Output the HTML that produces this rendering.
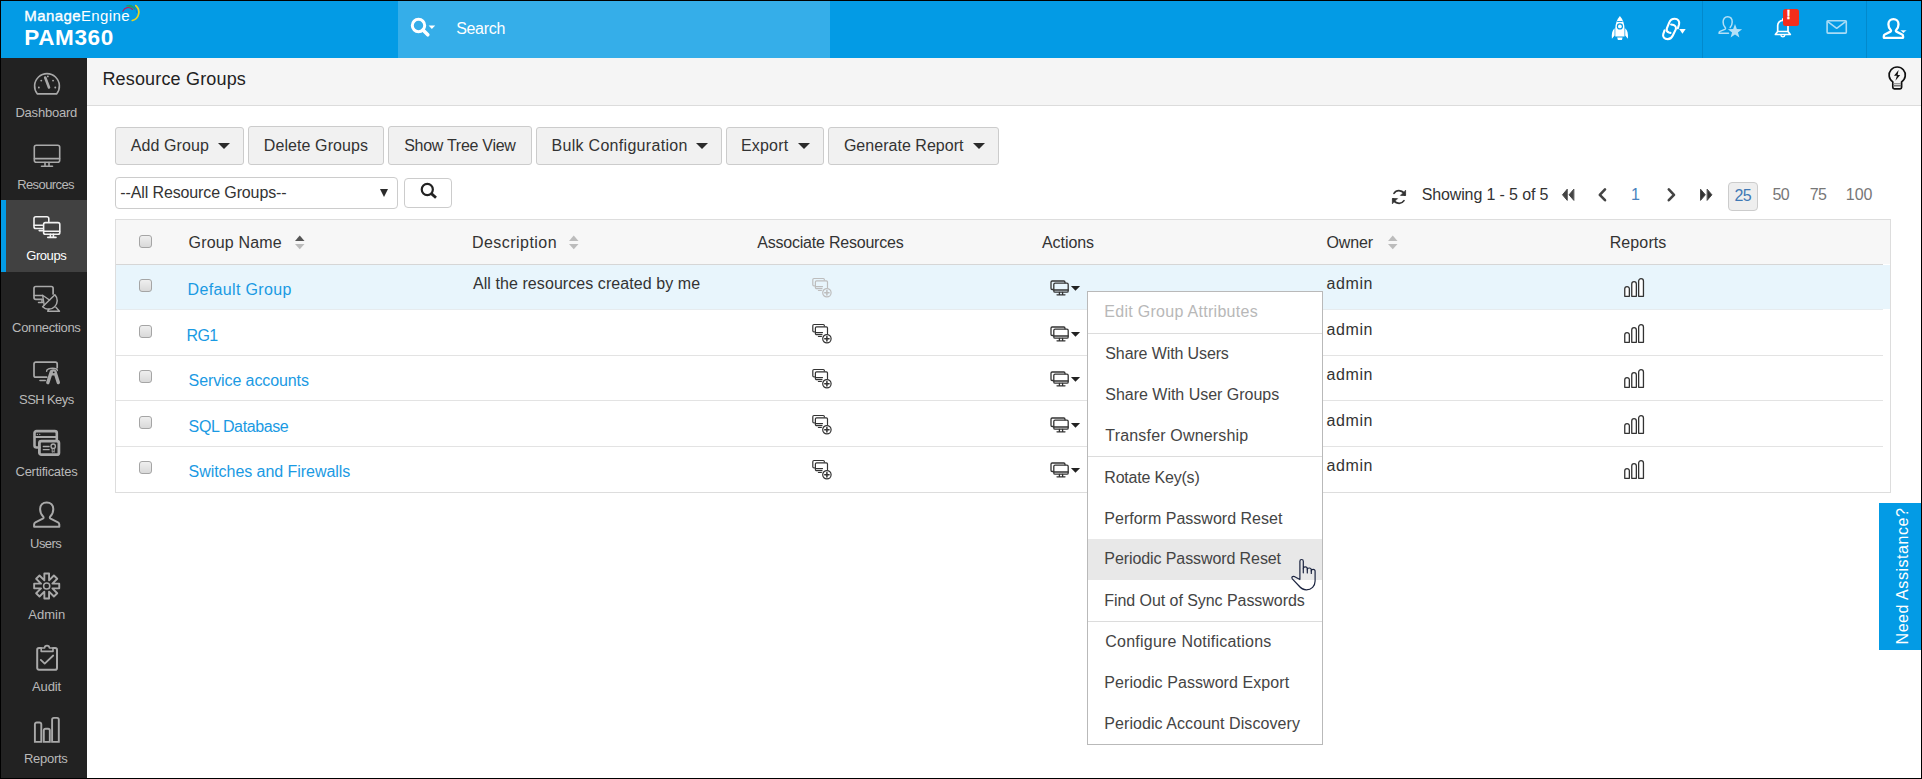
<!DOCTYPE html>
<html lang="en">
<head>
<meta charset="utf-8">
<title>Resource Groups - PAM360</title>
<style>
*{box-sizing:border-box;margin:0;padding:0}
html,body{width:1922px;height:779px;overflow:hidden;background:#000}
body{font-family:"Liberation Sans",sans-serif;font-size:16px;color:#333;position:relative}
#app{position:absolute;left:1px;top:1px;width:1920px;height:777px;background:#fff;overflow:hidden}
.abs{position:absolute}
.t{position:absolute;white-space:nowrap}
#hdr{position:absolute;left:0;top:0;width:1920px;height:57px;background:#039be5}
#srch{position:absolute;left:397px;top:0;width:432px;height:57px;background:#35aee9}
#side{position:absolute;left:0;top:57px;width:86px;height:720px;background:#222}
#navon{position:absolute;left:0;top:142px;width:86px;height:72px;background:#414141;border-left:5px solid #039be5}
.ni{position:absolute;width:32px;height:32px;fill:none;stroke:#a9a9a9;stroke-width:1.6;stroke-linecap:round;stroke-linejoin:round}
.ni.on{stroke:#f2f2f2}
#tbar{position:absolute;left:86px;top:57px;width:1834px;height:48px;background:#f5f5f5;border-bottom:1px solid #dcdcdc}
.btn{position:absolute;top:125px;height:39px;border:1px solid #ccc;border-radius:3px;background:#f1f1f1}
.caret{position:absolute;width:0;height:0;border-left:6px solid transparent;border-right:6px solid transparent;border-top:6px solid #2b2b2b}
#lg1{left:23.300px;top:4px;color:#fff;font-size:15px;line-height:22px;letter-spacing:.4px}
#lg1 b{font-weight:400;-webkit-text-stroke:.35px #fff}
#lg2{left:23.300px;top:24px;color:#fff;font-size:22.5px;font-weight:700;line-height:26px;letter-spacing:.6px}
#sel{position:absolute;left:114px;top:176px;width:283px;height:32px;border:1px solid #ccc;border-radius:4px;background:#fff}
#sbtn{position:absolute;left:403px;top:177px;width:48px;height:30px;border:1px solid #ccc;border-radius:4px;background:#fff}
#tbl{position:absolute;left:114px;top:218px;width:1776px;height:274px;border:1px solid #ddd;background:#fff}
#thead{position:absolute;left:0;top:0;width:1774px;height:44px;background:#f7f7f7}
.hl{position:absolute;left:0;width:1767px;height:1px;background:#e3e3e3}
#row1{position:absolute;left:0;top:45px;width:1774px;height:44px;background:#e8f5fc}
.cb{position:absolute;left:138px;width:13px;height:13px;border:1px solid #a5a5a5;border-radius:3px;background:linear-gradient(#efefef,#d9d9d9)}
#dd{position:absolute;left:1086px;top:290px;width:236px;height:454px;border:1px solid #b9b9b9;background:#fff}
.dv{position:absolute;left:0;width:234px;height:1px;background:#dcdcdc}
#ddh{position:absolute;left:0;top:247px;width:234px;height:41px;background:#e8e8e8}
#pg25{position:absolute;left:1727px;top:181px;width:30px;height:29px;border:1px solid #ccc;border-radius:4px;background:#eee}
#need{position:absolute;left:1878px;top:502px;width:42px;height:147px;background:#039be5}
#need span{position:absolute;left:23.500px;top:73px;white-space:nowrap;color:#fff;font-size:16px;line-height:20px;letter-spacing:.55px;transform:translate(-50%,-50%) rotate(-90deg)}
.ic{position:absolute;fill:none;stroke-linecap:round;stroke-linejoin:round}
#badge{left:1782px;top:8px;width:16px;height:17px;border-radius:2.5px;background:#f32d1b;color:#fff;font-size:12px;font-weight:700;line-height:13px;padding-left:3.600px;-webkit-text-stroke:.35px #fff}

</style>
</head>
<body>
<div id="app">
<div id="hdr">
  <div class="abs" id="lg1"><b>Manage</b>Engine</div>
  <svg class="abs" style="left:119px;top:2px" width="22" height="22" viewBox="0 0 22 22" fill="none" stroke-linecap="round">
    <path d="M2.800 8.300Q4.200 5.200 7.200 4.600T12.600 6.500" stroke="#c2185b" stroke-width="1.100"/>
    <path d="M5.400 3.100Q9.800 .6 13.200 3.200T15 6.900Q12.600 4.300 9.400 4T5.400 3.100Z" fill="#1f9a6d"/>
    <path d="M14.200 2.600Q16.800 5.600 16.700 9.600" stroke="#0a7fd0" stroke-width="1"/>
    <path d="M15.800 2.600A8.600 8.600 0 0 1 12.300 17.500" stroke="#ecd51f" stroke-width="1.700"/>
  </svg>
  <div class="abs" id="lg2">PAM360</div>
  <div id="srch">
    <svg class="abs" style="left:11px;top:15px" width="32" height="24" viewBox="0 0 32 24">
      <circle cx="9.5" cy="9.5" r="6.2" fill="none" stroke="#fff" stroke-width="3"/>
      <path d="M14 14 L18.800 18.800" stroke="#fff" stroke-width="3.600" stroke-linecap="round"/>
      <path d="M19.600 9.500h6.600l-3.300 3.400z" fill="#fff"/>
    </svg>
    
  </div>
  <svg class="abs" style="left:1609px;top:14px" width="20" height="26" viewBox="0 0 20 26" fill="#fff">
    <path d="M9.900 1C13 4.500 14.500 9 14.500 13.500V21.600H5.300V13.500C5.300 9 6.800 4.500 9.900 1Z"/>
    <path d="M4.600 13.200C2.300 15.300 1.400 18.500 1.900 23.800L4.600 20.600ZM15.200 13.200C17.500 15.300 18.400 18.500 17.900 23.800L15.200 20.600Z"/>
    <path d="M7.200 22.600H12.600L11.900 25.100H7.900Z"/>
    <path d="M7.200 6.500H12.600" stroke="#039be5" stroke-width=".9"/>
    <circle cx="9.900" cy="11.400" r="3.100" fill="#039be5"/><circle cx="9.900" cy="11.400" r="1.900"/>
  </svg>
  <svg class="abs" style="left:1659px;top:15px" width="28" height="26" viewBox="0 0 28 26" fill="none" stroke="#fff" stroke-width="2.100" stroke-linecap="round">
    <path d="M17.88 12.31 L19.07 8.29 C19.79 5.32 17.88 2.78 14.70 2.78 C11.95 2.78 10.25 4.05 9.19 6.59 L6.86 12.31 C6.23 14.22 7.29 15.92 8.98 16.55 L10.47 16.85"/>
    <path d="M4.53 14.43 L3.26 18.03 C2.42 20.79 4.32 23.12 7.71 23.12 C10.04 23.12 11.74 21.85 12.80 19.52 L15.76 13.37 C16.40 11.47 15.34 9.56 13.64 8.92 L11.10 8.50"/>
    <path d="M19.200 12.900H25.700L22.450 17.800Z" fill="#fff" stroke="none"/>
  </svg>
  <svg class="abs" style="left:1716px;top:14px" width="28" height="26" viewBox="0 0 28 26" fill="none" stroke="#b3e0f7" stroke-width="1.500" stroke-linecap="round" stroke-linejoin="round">
    <path d="M13.200 12.400C14.300 11.300 15.200 9.500 15.200 7C15.200 4 13.600 1.700 10.650 1.700C7.700 1.700 6.100 4 6.100 7C6.100 9.500 7 11.300 8.100 12.400C8.800 13.200 8.600 14 7.800 14.400L3 16.400C2.200 16.800 2 17.400 2 18.200H11.500"/>
    <path d="M18.00 9.00L19.82 13.99L25.13 14.18L20.95 17.46L22.41 22.57L18.00 19.60L13.59 22.57L15.05 17.46L10.87 14.18L16.18 13.99Z" fill="#b3e0f7" stroke="none"/>
  </svg>
  <svg class="abs" style="left:1772px;top:15px" width="20" height="24" viewBox="0 0 20 24" fill="none" stroke="#fff" stroke-width="1.700" stroke-linejoin="round">
    <path d="M9.850 2.200V4.300M4.700 15.500V9.500A5.150 5.150 0 0 1 15 9.500V15.500L17.300 18.500H2.400L4.700 15.500H15"/>
    <path d="M7.800 19.200A2.100 2.100 0 0 0 11.900 19.200" stroke-width="1.400"/>
  </svg>
  <div class="abs" id="badge">!</div>
  <svg class="abs" style="left:1824px;top:18px" width="24" height="17" viewBox="0 0 24 17" fill="none" stroke="#a9dcf6" stroke-width="1.600" stroke-linejoin="round">
    <rect x="2.100" y="1.800" width="19.200" height="12.300" rx=".8"/><path d="M2.500 2.300L11.700 9.300L20.900 2.300"/>
  </svg>
  <svg class="abs" style="left:1880px;top:16px" width="28" height="24" viewBox="0 0 28 24" fill="none" stroke="#fff" stroke-linejoin="round">
    <path d="M15.700 3.400C19.600 3.400 22.300 6.200 22.300 10C22.300 13.300 21.100 15.600 19.500 17.200C18.600 18.100 18.500 19.100 19.600 19.700L27 23.400C28 23.900 28.300 24.600 28.300 25.600V27.800H3.100V25.600C3.100 24.600 3.400 23.900 4.400 23.400L11.800 19.700C12.900 19.100 12.800 18.100 11.900 17.200C10.300 15.600 9.100 13.300 9.100 10C9.100 6.200 11.800 3.400 15.700 3.400Z" transform="translate(.44 -.45) scale(.765)" stroke-width="3"/>
    <path d="M18.900 13H25.900L22.400 16.200Z" fill="#fff" stroke="#039be5" stroke-width=".6"/>
  </svg>
  <div class="abs" style="left:1701px;top:0;width:1px;height:57px;background:#0289cc"></div>
  <div class="abs" style="left:1865px;top:0;width:1px;height:57px;background:#0289cc"></div>
</div><span class="t" style="left:455.2px;top:18px;font-size:16px;line-height:20px;letter-spacing:-0.32px;color:#fff">Search</span>
<div id="side"><div id="navon"></div></div>
<svg class="ni" style="left:30px;top:67.0px" viewBox="0 0 32 32"><path d="M6.4 25.9 A12.4 12.4 0 1 1 25.6 25.9 Z"/><path d="M14.2 9.5 L18 19.5" stroke-width="2.6"/><path d="M7.8 19.5h.1M10.2 12.6h.1M16.8 8.4h.1M22 12.6h.1M24.2 19.5h.1" stroke-width="1.8"/></svg>
<svg class="ni" style="left:30px;top:139.0px" viewBox="0 0 32 32"><rect x="3.3" y="5.3" width="25.4" height="17" rx="2"/><path d="M3.5 18.6H28.5M14 22.5V25.6M18 22.5V25.6M10.5 26.2H21.5"/></svg>
<svg class="ni on" style="left:30px;top:210.0px" viewBox="0 0 32 32"><path d="M11.5 17.5H4.8a1.8 1.8 0 0 1-1.8-1.8V7.6a1.8 1.8 0 0 1 1.8-1.8H16a1.8 1.8 0 0 1 1.8 1.8V10.5"/><path d="M3.2 14.2H11.5M8.2 19.6H11.5"/><rect x="12.6" y="11.6" width="16.2" height="11.6" rx="1.8"/><path d="M12.8 20.2H28.6M19.4 23.4V26M22.4 23.4V26M16.8 26.4H25"/></svg>
<svg class="ni" style="left:30px;top:282.2px" viewBox="0 0 32 32"><path d="M11 16.3H4.800a1.800 1.800 0 0 1-1.800-1.800V5.300a1.800 1.800 0 0 1 1.800-1.800H20.300a1.800 1.800 0 0 1 1.800 1.800V11" stroke-width="1.700"/><path d="M3.200 12.500H11M7.500 19.400H11.500M11 16.500V19.200" stroke-width="1.500"/><path d="M23.900 11.700A8.630 8.630 0 0 1 11.600 23.800Z" stroke-width="1.500"/><path d="M13.200 22.200L11.600 12.200L18.500 17" stroke-width="1.400"/><path d="M24.900 24.200L28.500 28.200H16.700L18 25.800" stroke-width="1.400"/></svg>
<svg class="ni" style="left:30px;top:355.7px" viewBox="0 0 32 32"><path d="M15.700 20.200H4.800a1.800 1.800 0 0 1-1.800-1.800V6.900a1.800 1.800 0 0 1 1.800-1.800H24.400a1.800 1.800 0 0 1 1.800 1.800V10.700" stroke-width="1.700"/><path d="M9 23.500H14.200"/><path d="M15.600 14.200C15.400 12 19 11.300 21.500 11.300S26.300 12 26.300 13.600" stroke-width="1.400"/><path d="M20.300 15L16.800 25.600M24 15L27.300 25.600" stroke-width="3.400"/><circle cx="22.200" cy="15.400" r="3.100" fill="#a9a9a9" stroke="none"/><circle cx="22.700" cy="15.300" r=".9" fill="#222" stroke="none"/></svg>
<svg class="ni" style="left:30px;top:426.0px" viewBox="0 0 32 32"><path d="M8.400 20.500H5.500a2 2 0 0 1-2-2V6.100a2 2 0 0 1 2-2H23.800a2 2 0 0 1 2 2V13.500" stroke-width="2.600"/><path d="M3.700 10.100H25.600" stroke-width="2"/><path d="M6.300 7.400h.1M8.700 7.400h.1" stroke-width="1.100"/><rect x="8.400" y="14.100" width="19.500" height="13.600" rx="2" stroke-width="2.800"/><path d="M12.300 19.500H18.100M12.300 22.700H18.100" stroke-width="1.300"/><circle cx="22.200" cy="19.200" r="2.200" stroke-width="1.400"/><path d="M21.200 21.500V25.300L22.200 24.500L23.200 25.300V21.500" stroke-width="1"/></svg>
<svg class="ni" style="left:30px;top:498.3px" viewBox="0 0 32 32"><path d="M15.700 3.400C19.600 3.400 22.300 6.200 22.300 10C22.300 13.300 21.100 15.600 19.500 17.200C18.600 18.100 18.500 19.100 19.600 19.700L27 23.400C28 23.900 28.300 24.600 28.300 25.600V27.800H3.100V25.600C3.100 24.600 3.400 23.900 4.400 23.400L11.800 19.700C12.900 19.100 12.800 18.100 11.900 17.200C10.300 15.600 9.100 13.300 9.100 10C9.100 6.200 11.800 3.400 15.700 3.400Z" stroke-width="2"/></svg>
<svg class="ni" style="left:30px;top:569.0px" viewBox="0 0 32 32"><path d="M13.35 3.45L18.05 3.45L18.05 10.33L22.91 5.46L26.24 8.79L21.37 13.65L28.25 13.65L28.25 18.35L21.37 18.35L26.24 23.21L22.91 26.54L18.05 21.67L18.05 28.55L13.35 28.55L13.35 21.67L8.49 26.54L5.16 23.21L10.03 18.35L3.15 18.35L3.15 13.65L10.03 13.65L5.16 8.79L8.49 5.46L13.35 10.33Z" stroke-width="1.900" stroke-linejoin="round"/><circle cx="15.7" cy="16.0" r="3.100" stroke-width="1.500"/></svg>
<svg class="ni" style="left:30px;top:641.4px" viewBox="0 0 32 32"><path d="M10.200 6.100H8a1.800 1.800 0 0 0-1.800 1.800V25.900a1.800 1.800 0 0 0 1.800 1.800H24.200a1.800 1.800 0 0 0 1.800-1.800V7.900a1.800 1.800 0 0 0-1.800-1.800H22" stroke-width="2"/><path d="M10.200 9.400V7a1 1 0 0 1 1-1H13.600A2.400 2.400 0 0 1 18.400 6H21a1 1 0 0 1 1 1V9.400Z" stroke-width="1.600"/><path d="M9.800 17.900L13.700 21.600L22.200 13.500" stroke-width="1.800"/></svg>
<svg class="ni" style="left:30px;top:713.0px" viewBox="0 0 32 32"><path d="M3.9 27.9V10.30a1.8 1.8 0 0 1 1.8 -1.8H8.50a1.8 1.8 0 0 1 1.8 1.8V27.9ZM12.8 27.9V16.50a1.8 1.8 0 0 1 1.8 -1.8H17.00a1.8 1.8 0 0 1 1.8 1.8V27.9ZM21.1 27.9V5.70a1.8 1.8 0 0 1 1.8 -1.8H26.00a1.8 1.8 0 0 1 1.8 1.8V27.9Z" stroke-width="1.900" stroke-linejoin="miter"/></svg>
<span class="t" style="left:14.4px;top:104px;font-size:13px;line-height:16px;letter-spacing:-0.21px;color:#b9b9b9">Dashboard</span>
<span class="t" style="left:16.2px;top:176px;font-size:13px;line-height:16px;letter-spacing:-0.6px;color:#b9b9b9">Resources</span>
<span class="t" style="left:25.3px;top:247px;font-size:13px;line-height:16px;letter-spacing:-0.45px;color:#fff">Groups</span>
<span class="t" style="left:11.1px;top:319px;font-size:13px;line-height:16px;letter-spacing:-0.35px;color:#b9b9b9">Connections</span>
<span class="t" style="left:18.1px;top:391px;font-size:13px;line-height:16px;letter-spacing:-0.6px;color:#b9b9b9">SSH Keys</span>
<span class="t" style="left:14.5px;top:463px;font-size:13px;line-height:16px;letter-spacing:-0.26px;color:#b9b9b9">Certificates</span>
<span class="t" style="left:29.1px;top:535px;font-size:13px;line-height:16px;letter-spacing:-0.6px;color:#b9b9b9">Users</span>
<span class="t" style="left:27.2px;top:606px;font-size:13px;line-height:16px;letter-spacing:0.05px;color:#b9b9b9">Admin</span>
<span class="t" style="left:30.9px;top:678px;font-size:13px;line-height:16px;letter-spacing:-0.08px;color:#b9b9b9">Audit</span>
<span class="t" style="left:23.0px;top:750px;font-size:13px;line-height:16px;letter-spacing:-0.29px;color:#b9b9b9">Reports</span>

<div id="tbar"></div>
<span class="t" style="left:101.4px;top:67px;font-size:18px;line-height:22px;letter-spacing:0.17px;color:#222">Resource Groups</span>
<svg class="ic" style="left:1886px;top:64px" width="22" height="26" viewBox="0 0 22 26" stroke="#111" stroke-width="1.700">
<path d="M5.800 16.900A8.100 8.100 0 1 1 14.600 16.900V22.300a1.500 1.500 0 0 1-1.500 1.500H7.300a1.500 1.500 0 0 1-1.500-1.500Z"/>
<path d="M7 18.500H13.400" stroke="#9a9a9a" stroke-width="1.200"/><path d="M7 20.700H13.400" stroke="#777" stroke-width="1.700"/>
<path d="M11.600 5.100L7 10.700H9.900L8.400 15.700L13.200 10H10.600Z" fill="#111" stroke="none"/>
</svg>
<div class="btn" style="left:114px;width:129px;top:126px;height:38px"></div>
<span class="t" style="left:129.8px;top:135px;font-size:16px;line-height:20px;letter-spacing:0.09px;color:#333">Add Group</span>
<i class="caret" style="left:217px;top:142px"></i>
<div class="btn" style="left:247px;width:136px;top:125px;height:39px"></div>
<span class="t" style="left:262.8px;top:135px;font-size:16px;line-height:20px;letter-spacing:0.09px;color:#333">Delete Groups</span>
<div class="btn" style="left:387px;width:144px;top:125px;height:39px"></div>
<span class="t" style="left:403.2px;top:135px;font-size:16px;line-height:20px;letter-spacing:-0.28px;color:#333">Show Tree View</span>
<div class="btn" style="left:535px;width:186px;top:126px;height:38px"></div>
<span class="t" style="left:550.5px;top:135px;font-size:16px;line-height:20px;letter-spacing:0.3px;color:#333">Bulk Configuration</span>
<i class="caret" style="left:695px;top:142px"></i>
<div class="btn" style="left:725px;width:98px;top:126px;height:38px"></div>
<span class="t" style="left:739.9px;top:135px;font-size:16px;line-height:20px;letter-spacing:0.2px;color:#333">Export</span>
<i class="caret" style="left:797px;top:142px"></i>
<div class="btn" style="left:827px;width:171px;top:126px;height:38px"></div>
<span class="t" style="left:842.9px;top:135px;font-size:16px;line-height:20px;letter-spacing:0.03px;color:#333">Generate Report</span>
<i class="caret" style="left:972px;top:142px"></i>
<div id="sel"></div>
<span class="t" style="left:119.3px;top:182px;font-size:16px;line-height:20px;letter-spacing:-0.12px;color:#333">--All Resource Groups--</span>
<i class="caret" style="left:379px;top:188px;border-left-width:4.500px;border-right-width:4.500px;border-top-width:8px"></i>
<div id="sbtn"><svg class="ic" style="left:15px;top:3px" width="20" height="20" viewBox="0 0 20 20" stroke="#222"><circle cx="7.300" cy="7.500" r="5.550" stroke-width="2.200"/><path d="M11.400 11.600L16 15.800" stroke-width="2.800" stroke-linecap="butt"/></svg></div>
<svg class="ic" style="left:1389px;top:187px" width="18" height="18" viewBox="0 0 18 18" stroke="#333" stroke-width="1.700">
<path d="M14.800 7.200A6 6 0 0 0 4 5.400M3.200 10.800A6 6 0 0 0 14 12.600"/><path d="M15.600 2.600V7.400H10.800zM2.400 15.400V10.600H7.200z" fill="#333" stroke-width=".8"/></svg>
<span class="t" style="left:1420.7px;top:184px;font-size:16px;line-height:20px;letter-spacing:-0.13px;color:#333">Showing 1 - 5 of 5</span>
<svg class="ic" style="left:1558px;top:185px" width="158" height="18" viewBox="0 0 158 18" stroke="#444" stroke-width="2.600" stroke-linejoin="miter" stroke-linecap="butt">
<path d="M8 3.500L3.500 8.800L8 14.100zM14.600 3.500L10.100 8.800L14.600 14.100z" fill="#444" stroke-width="1"/>
<path d="M46 3.400L40.800 8.800L46 14.200"/>
<path d="M109.800 3.400L115 8.800L109.800 14.200"/>
<path d="M141.800 3.500L146.300 8.800L141.800 14.100zM148.400 3.500L152.900 8.800L148.400 14.100z" fill="#333" stroke-width="1"/>
</svg>
<span class="t" style="left:1630.1px;top:184px;font-size:16px;line-height:20px;letter-spacing:0px;color:#4a82bd">1</span>
<div id="pg25"></div>
<span class="t" style="left:1733.4px;top:185px;font-size:16px;line-height:20px;letter-spacing:-0.6px;color:#3f79b5">25</span>
<span class="t" style="left:1771.5px;top:184px;font-size:16px;line-height:20px;letter-spacing:-0.6px;color:#777">50</span>
<span class="t" style="left:1808.7px;top:184px;font-size:16px;line-height:20px;letter-spacing:-0.6px;color:#777">75</span>
<span class="t" style="left:1844.7px;top:184px;font-size:16px;line-height:20px;letter-spacing:0.05px;color:#777">100</span>
<div id="tbl"><div id="thead"></div><div id="row1"></div>
<div class="hl" style="top:44px;background:#d6d6d6"></div>
<div class="hl" style="top:89px;background:#e6ebee"></div>
<div class="hl" style="top:135px"></div>
<div class="hl" style="top:180px"></div>
<div class="hl" style="top:226px"></div>
</div>
<div class="cb" style="top:234px"></div>
<div class="cb" style="top:278px"></div>
<div class="cb" style="top:324px"></div>
<div class="cb" style="top:369px"></div>
<div class="cb" style="top:415px"></div>
<div class="cb" style="top:460px"></div>
<span class="t" style="left:187.6px;top:232px;font-size:16px;line-height:20px;letter-spacing:0.16px;color:#333">Group Name</span>
<svg class="abs" style="left:293.8px;top:234px" width="10" height="16" viewBox="0 0 10 16"><path d="M0 6L4.750 .6L9.500 6z" fill="#555"/><path d="M0 9.100L4.750 14.300L9.500 9.100z" fill="#bcbcbc"/></svg>
<span class="t" style="left:471.0px;top:232px;font-size:16px;line-height:20px;letter-spacing:0.46px;color:#333">Description</span>
<svg class="abs" style="left:567.9px;top:234px" width="10" height="16" viewBox="0 0 10 16"><path d="M0 6L4.750 .6L9.500 6z" fill="#bcbcbc"/><path d="M0 9.100L4.750 14.300L9.500 9.100z" fill="#bcbcbc"/></svg>
<span class="t" style="left:756.3px;top:232px;font-size:16px;line-height:20px;letter-spacing:-0.22px;color:#333">Associate Resources</span>
<span class="t" style="left:1040.9px;top:232px;font-size:16px;line-height:20px;letter-spacing:-0.04px;color:#333">Actions</span>
<span class="t" style="left:1325.6px;top:232px;font-size:16px;line-height:20px;letter-spacing:-0.17px;color:#333">Owner</span>
<svg class="abs" style="left:1386.8px;top:234px" width="10" height="16" viewBox="0 0 10 16"><path d="M0 6L4.750 .6L9.500 6z" fill="#bcbcbc"/><path d="M0 9.100L4.750 14.300L9.500 9.100z" fill="#bcbcbc"/></svg>
<span class="t" style="left:1608.7px;top:232px;font-size:16px;line-height:20px;letter-spacing:0.11px;color:#333">Reports</span>
<span class="t" style="left:186.6px;top:279px;font-size:16px;line-height:20px;letter-spacing:0.34px;color:#1a9ae3">Default Group</span>
<span class="t" style="left:1325.6px;top:273px;font-size:16px;line-height:20px;letter-spacing:0.58px;color:#333">admin</span>
<svg class="ic" style="left:810px;top:276px" width="24" height="22" viewBox="0 0 24 22" stroke="#bdbdbd" stroke-width="1.200">
<path d="M3.400 8.900H3a1.200 1.200 0 0 1-1.200-1.200V2.700a1.200 1.200 0 0 1 1.200-1.200h9.200a1.200 1.200 0 0 1 1.200 1.200V3"/>
<path d="M11 11.700H5.600a1.200 1.200 0 0 1-1.200-1.200V5.100a1.200 1.200 0 0 1 1.200-1.200H15.300a1.200 1.200 0 0 1 1.200 1.200V10.500"/>
<path d="M4.600 9.600H11.500M7.400 13.500h3" />
<circle cx="15.900" cy="15.750" r="4.200"/><path d="M15.900 13.600v4.300M13.750 15.750h4.300" stroke-width="1.500"/></svg>
<svg class="ic" style="left:1048px;top:278px" width="32" height="18" viewBox="0 0 32 18" stroke="#333" stroke-width="1.300">
<path d="M4 10.500H3.200a1.200 1.200 0 0 1-1.200-1.200V3.200a1.200 1.200 0 0 1 1.200-1.200h11.600a1.200 1.200 0 0 1 1.200 1.200V3.800"/>
<rect x="4.800" y="4.200" width="14.400" height="9" rx="1.300"/><path d="M5 11h14M10.400 13.400v2M13.600 13.400v2M8 15.800h8" />
<path d="M21.900 6.900h9.200l-4.600 4.800z" fill="#222" stroke="none"/></svg>
<svg class="ic" style="left:1622px;top:276px" width="24" height="22" viewBox="0 0 24 22" stroke="#333" stroke-width="1.300" stroke-linejoin="miter">
<path d="M1.75 19.35V11.85A2.30 2.30 0 0 1 6.35 11.85V19.35ZM8.75 19.35V6.95A2.30 2.30 0 0 1 13.35 6.95V19.35ZM15.65 19.35V4.05A2.40 2.40 0 0 1 20.45 4.05V19.35Z" fill="#fff"/></svg>
<span class="t" style="left:185.5px;top:325px;font-size:16px;line-height:20px;letter-spacing:-0.6px;color:#1a9ae3">RG1</span>
<span class="t" style="left:1325.6px;top:319px;font-size:16px;line-height:20px;letter-spacing:0.58px;color:#333">admin</span>
<svg class="ic" style="left:810px;top:322px" width="24" height="22" viewBox="0 0 24 22" stroke="#333" stroke-width="1.200">
<path d="M3.400 8.900H3a1.200 1.200 0 0 1-1.200-1.200V2.700a1.200 1.200 0 0 1 1.200-1.200h9.200a1.200 1.200 0 0 1 1.200 1.200V3"/>
<path d="M11 11.700H5.600a1.200 1.200 0 0 1-1.200-1.200V5.100a1.200 1.200 0 0 1 1.200-1.200H15.300a1.200 1.200 0 0 1 1.200 1.200V10.500"/>
<path d="M4.600 9.600H11.500M7.400 13.500h3" />
<circle cx="15.900" cy="15.750" r="4.200"/><path d="M15.900 13.600v4.300M13.750 15.750h4.300" stroke-width="1.500"/></svg>
<svg class="ic" style="left:1048px;top:324px" width="32" height="18" viewBox="0 0 32 18" stroke="#333" stroke-width="1.300">
<path d="M4 10.500H3.200a1.200 1.200 0 0 1-1.200-1.200V3.200a1.200 1.200 0 0 1 1.200-1.200h11.600a1.200 1.200 0 0 1 1.200 1.200V3.800"/>
<rect x="4.800" y="4.200" width="14.400" height="9" rx="1.300"/><path d="M5 11h14M10.400 13.400v2M13.600 13.400v2M8 15.800h8" />
<path d="M21.900 6.900h9.200l-4.600 4.800z" fill="#222" stroke="none"/></svg>
<svg class="ic" style="left:1622px;top:322px" width="24" height="22" viewBox="0 0 24 22" stroke="#333" stroke-width="1.300" stroke-linejoin="miter">
<path d="M1.75 19.35V11.85A2.30 2.30 0 0 1 6.35 11.85V19.35ZM8.75 19.35V6.95A2.30 2.30 0 0 1 13.35 6.95V19.35ZM15.65 19.35V4.05A2.40 2.40 0 0 1 20.45 4.05V19.35Z" fill="#fff"/></svg>
<span class="t" style="left:187.6px;top:370px;font-size:16px;line-height:20px;letter-spacing:-0.1px;color:#1a9ae3">Service accounts</span>
<span class="t" style="left:1325.6px;top:364px;font-size:16px;line-height:20px;letter-spacing:0.58px;color:#333">admin</span>
<svg class="ic" style="left:810px;top:367px" width="24" height="22" viewBox="0 0 24 22" stroke="#333" stroke-width="1.200">
<path d="M3.400 8.900H3a1.200 1.200 0 0 1-1.200-1.200V2.700a1.200 1.200 0 0 1 1.200-1.200h9.200a1.200 1.200 0 0 1 1.200 1.200V3"/>
<path d="M11 11.700H5.600a1.200 1.200 0 0 1-1.200-1.200V5.100a1.200 1.200 0 0 1 1.200-1.200H15.300a1.200 1.200 0 0 1 1.200 1.200V10.500"/>
<path d="M4.600 9.600H11.500M7.400 13.500h3" />
<circle cx="15.900" cy="15.750" r="4.200"/><path d="M15.900 13.600v4.300M13.750 15.750h4.300" stroke-width="1.500"/></svg>
<svg class="ic" style="left:1048px;top:369px" width="32" height="18" viewBox="0 0 32 18" stroke="#333" stroke-width="1.300">
<path d="M4 10.500H3.200a1.200 1.200 0 0 1-1.200-1.200V3.200a1.200 1.200 0 0 1 1.200-1.200h11.600a1.200 1.200 0 0 1 1.200 1.200V3.800"/>
<rect x="4.800" y="4.200" width="14.400" height="9" rx="1.300"/><path d="M5 11h14M10.400 13.400v2M13.600 13.400v2M8 15.800h8" />
<path d="M21.900 6.900h9.200l-4.600 4.800z" fill="#222" stroke="none"/></svg>
<svg class="ic" style="left:1622px;top:367px" width="24" height="22" viewBox="0 0 24 22" stroke="#333" stroke-width="1.300" stroke-linejoin="miter">
<path d="M1.75 19.35V11.85A2.30 2.30 0 0 1 6.35 11.85V19.35ZM8.75 19.35V6.95A2.30 2.30 0 0 1 13.35 6.95V19.35ZM15.65 19.35V4.05A2.40 2.40 0 0 1 20.45 4.05V19.35Z" fill="#fff"/></svg>
<span class="t" style="left:187.6px;top:416px;font-size:16px;line-height:20px;letter-spacing:-0.38px;color:#1a9ae3">SQL Database</span>
<span class="t" style="left:1325.6px;top:410px;font-size:16px;line-height:20px;letter-spacing:0.58px;color:#333">admin</span>
<svg class="ic" style="left:810px;top:413px" width="24" height="22" viewBox="0 0 24 22" stroke="#333" stroke-width="1.200">
<path d="M3.400 8.900H3a1.200 1.200 0 0 1-1.200-1.200V2.700a1.200 1.200 0 0 1 1.200-1.200h9.200a1.200 1.200 0 0 1 1.200 1.200V3"/>
<path d="M11 11.700H5.600a1.200 1.200 0 0 1-1.200-1.200V5.100a1.200 1.200 0 0 1 1.200-1.200H15.300a1.200 1.200 0 0 1 1.200 1.200V10.500"/>
<path d="M4.600 9.600H11.500M7.400 13.500h3" />
<circle cx="15.900" cy="15.750" r="4.200"/><path d="M15.900 13.600v4.300M13.750 15.750h4.300" stroke-width="1.500"/></svg>
<svg class="ic" style="left:1048px;top:415px" width="32" height="18" viewBox="0 0 32 18" stroke="#333" stroke-width="1.300">
<path d="M4 10.500H3.200a1.200 1.200 0 0 1-1.200-1.200V3.200a1.200 1.200 0 0 1 1.200-1.200h11.600a1.200 1.200 0 0 1 1.200 1.200V3.800"/>
<rect x="4.800" y="4.200" width="14.400" height="9" rx="1.300"/><path d="M5 11h14M10.400 13.400v2M13.600 13.400v2M8 15.800h8" />
<path d="M21.900 6.900h9.200l-4.600 4.800z" fill="#222" stroke="none"/></svg>
<svg class="ic" style="left:1622px;top:413px" width="24" height="22" viewBox="0 0 24 22" stroke="#333" stroke-width="1.300" stroke-linejoin="miter">
<path d="M1.75 19.35V11.85A2.30 2.30 0 0 1 6.35 11.85V19.35ZM8.75 19.35V6.95A2.30 2.30 0 0 1 13.35 6.95V19.35ZM15.65 19.35V4.05A2.40 2.40 0 0 1 20.45 4.05V19.35Z" fill="#fff"/></svg>
<span class="t" style="left:187.6px;top:461px;font-size:16px;line-height:20px;letter-spacing:-0.05px;color:#1a9ae3">Switches and Firewalls</span>
<span class="t" style="left:1325.6px;top:455px;font-size:16px;line-height:20px;letter-spacing:0.58px;color:#333">admin</span>
<svg class="ic" style="left:810px;top:458px" width="24" height="22" viewBox="0 0 24 22" stroke="#333" stroke-width="1.200">
<path d="M3.400 8.900H3a1.200 1.200 0 0 1-1.200-1.200V2.700a1.200 1.200 0 0 1 1.200-1.200h9.200a1.200 1.200 0 0 1 1.200 1.200V3"/>
<path d="M11 11.700H5.600a1.200 1.200 0 0 1-1.200-1.200V5.100a1.200 1.200 0 0 1 1.200-1.200H15.300a1.200 1.200 0 0 1 1.200 1.200V10.500"/>
<path d="M4.600 9.600H11.500M7.400 13.500h3" />
<circle cx="15.900" cy="15.750" r="4.200"/><path d="M15.900 13.600v4.300M13.750 15.750h4.300" stroke-width="1.500"/></svg>
<svg class="ic" style="left:1048px;top:460px" width="32" height="18" viewBox="0 0 32 18" stroke="#333" stroke-width="1.300">
<path d="M4 10.500H3.200a1.200 1.200 0 0 1-1.200-1.200V3.200a1.200 1.200 0 0 1 1.200-1.200h11.600a1.200 1.200 0 0 1 1.200 1.200V3.800"/>
<rect x="4.800" y="4.200" width="14.400" height="9" rx="1.300"/><path d="M5 11h14M10.400 13.400v2M13.600 13.400v2M8 15.800h8" />
<path d="M21.900 6.900h9.200l-4.600 4.800z" fill="#222" stroke="none"/></svg>
<svg class="ic" style="left:1622px;top:458px" width="24" height="22" viewBox="0 0 24 22" stroke="#333" stroke-width="1.300" stroke-linejoin="miter">
<path d="M1.75 19.35V11.85A2.30 2.30 0 0 1 6.35 11.85V19.35ZM8.75 19.35V6.95A2.30 2.30 0 0 1 13.35 6.95V19.35ZM15.65 19.35V4.05A2.40 2.40 0 0 1 20.45 4.05V19.35Z" fill="#fff"/></svg>
<span class="t" style="left:472.0px;top:273px;font-size:16px;line-height:20px;letter-spacing:0.07px;color:#333">All the resources created by me</span>
<div id="need"><span>Need Assistance?</span></div>
<div id="dd"><div id="ddh"></div><div class="dv" style="top:41px"></div><div class="dv" style="top:164px"></div><div class="dv" style="top:329px"></div></div>
<span class="t" style="left:1103.3px;top:301px;font-size:16px;line-height:20px;letter-spacing:0.29px;color:#b8b8b8">Edit Group Attributes</span>
<span class="t" style="left:1104.3px;top:343px;font-size:16px;line-height:20px;letter-spacing:-0.12px;color:#444">Share With Users</span>
<span class="t" style="left:1104.3px;top:384px;font-size:16px;line-height:20px;letter-spacing:-0.02px;color:#444">Share With User Groups</span>
<span class="t" style="left:1104.3px;top:425px;font-size:16px;line-height:20px;letter-spacing:0.18px;color:#444">Transfer Ownership</span>
<span class="t" style="left:1103.3px;top:467px;font-size:16px;line-height:20px;letter-spacing:-0.2px;color:#444">Rotate Key(s)</span>
<span class="t" style="left:1103.3px;top:508px;font-size:16px;line-height:20px;letter-spacing:0.01px;color:#444">Perform Password Reset</span>
<span class="t" style="left:1103.3px;top:548px;font-size:16px;line-height:20px;letter-spacing:-0.09px;color:#444">Periodic Password Reset</span>
<span class="t" style="left:1103.2px;top:590px;font-size:16px;line-height:20px;letter-spacing:-0.05px;color:#444">Find Out of Sync Passwords</span>
<span class="t" style="left:1104.3px;top:631px;font-size:16px;line-height:20px;letter-spacing:0.23px;color:#444">Configure Notifications</span>
<span class="t" style="left:1103.3px;top:672px;font-size:16px;line-height:20px;letter-spacing:0.07px;color:#444">Periodic Password Export</span>
<span class="t" style="left:1103.3px;top:713px;font-size:16px;line-height:20px;letter-spacing:0.07px;color:#444">Periodic Account Discovery</span>
<svg class="abs" style="left:1289px;top:557px" width="30" height="36" viewBox="0 0 30 36" fill="none" stroke="#1b2440" stroke-width="1.200" stroke-linejoin="round" stroke-linecap="round">
<path d="M9.900 20.800V3.200a1.700 1.700 0 0 1 3.400 0V10.800c0-1.200.8-1.900 1.900-1.900s2.100.8 2.100 2v.9c0-1.100.8-1.800 1.900-1.800s2.100.8 2.100 2v1c0-1 .8-1.600 1.800-1.600s2 .7 2 1.900V23c0 5.200-3.700 8.800-8.700 8.800c-3.600 0-5.700-1.700-7.800-4.300L2.300 20.800c-1.200-1.600.4-3 2-2.300L9.900 21.500"/>
<path d="M13.300 10.800V14.800M17.300 11.800V15M21.300 12.600V15.400" fill="none"/></svg>
</div>
</body>
</html>
